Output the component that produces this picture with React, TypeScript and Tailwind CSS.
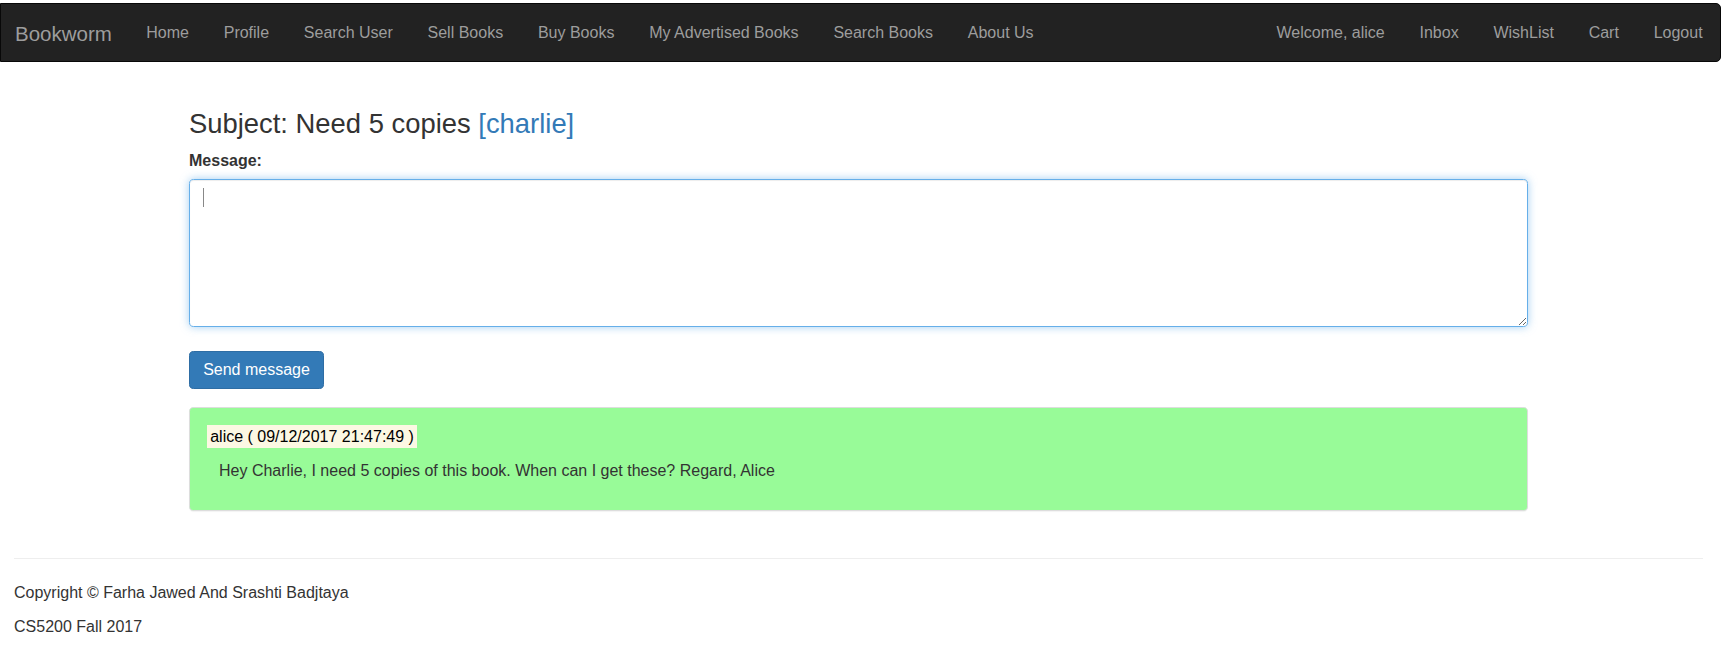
const leftLinks = ['Home', 'Profile', 'Search User', 'Sell Books', 'Buy Books', 'My Advertised Books', 'Search Books', 'About Us']
const rightLinks = ['Welcome, alice', 'Inbox', 'WishList', 'Cart', 'Logout']

function NavBar() {
  return (
    <div className="pt-[3px] pr-[2px]">
      <nav className="flex h-[59px] items-center rounded-r-[5px] border border-[#080808] bg-[#222] pl-[14px]">
        <a className="pt-[3px] pr-[17px] text-[20.5px] leading-[22.86px] text-[#9d9d9d]">Bookworm</a>
        <ul className="flex">
          {leftLinks.map((l) => (
            <li key={l}>
              <a className="block px-[17.4px] pt-[2px] text-[#9d9d9d]">{l}</a>
            </li>
          ))}
        </ul>
        <ul className="ml-auto flex">
          {rightLinks.map((l) => (
            <li key={l}>
              <a className="block px-[17.4px] pt-[2px] text-[#9d9d9d]">{l}</a>
            </li>
          ))}
        </ul>
      </nav>
    </div>
  )
}

export default function App() {
  return (
    <div className="min-h-screen bg-white font-['Liberation_Sans',Arial,sans-serif] text-base leading-[22.86px] text-[#333]">
      <NavBar />

      <main className="ml-[189px] w-[1339px]">
        <h3 className="mt-[47px] mb-[11.4px] text-[27.4px] leading-[30px] font-normal">
          Subject: Need 5 copies <span className="text-[#337ab7]">[charlie]</span>
        </h3>
        <label className="mb-[5.7px] block font-bold">Message:</label>
        <div className="relative">
          <textarea className="block h-[148px] w-full rounded-[4.6px] border border-[#66afe9] px-[13.7px] py-[6.9px] shadow-[inset_0_1px_1px_rgba(0,0,0,0.075),0_0_8px_rgba(102,175,233,0.6)] outline-none" />
          <span className="pointer-events-none absolute left-[14px] top-[9px] h-[19px] w-px bg-[#888]" />
        </div>
        <button className="mt-[24px] h-[38px] w-[135px] rounded-[4.6px] border border-[#2e6da4] bg-[#337ab7] text-white">
          Send message
        </button>
        <div className="mt-[18px] h-[104px] rounded-[4.6px] border border-[#ddd] bg-[#98fb98] px-[17px] pt-[18px] shadow-[0_1px_1px_rgba(0,0,0,0.05)]">
          <div>
            <mark className="bg-[#fcf8e3] px-[3.2px] py-[3.2px] text-black">alice ( 09/12/2017 21:47:49 )</mark>
          </div>
          <p className="mt-[11.4px] pl-[12px]">
            Hey Charlie, I need 5 copies of this book. When can I get these? Regard, Alice
          </p>
        </div>
      </main>

      <footer className="mt-[47px] ml-[14px] mr-[20px]">
        <hr className="border-t border-[#eee]" />
        <p className="mt-[23px]">Copyright © Farha Jawed And Srashti Badjtaya</p>
        <p className="mt-[11.4px]">CS5200 Fall 2017</p>
      </footer>
    </div>
  )
}
